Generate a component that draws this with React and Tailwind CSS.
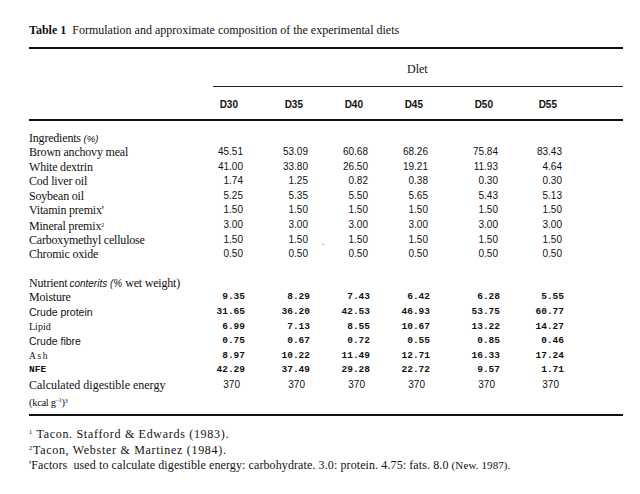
import React from "react";

const serif = "font-['Liberation_Serif','Times_New_Roman',serif]";
const sans = "font-['Liberation_Sans',Arial,sans-serif]";
const mono = "font-['Liberation_Mono','Courier_New',monospace]";
const row = "grid grid-cols-[184px_30px_65px_60px_60px_70px_64px] h-[14.6px] leading-[14.6px] overflow-visible";

const ingredients = [
  ["Brown anchovy meal", ["45.51", "53.09", "60.68", "68.26", "75.84", "83.43"]],
  ["White dextrin", ["41.00", "33.80", "26.50", "19.21", "11.93", "4.64"]],
  ["Cod liver oil", ["1.74", "1.25", "0.82", "0.38", "0.30", "0.30"]],
  ["Soybean oil", ["5.25", "5.35", "5.50", "5.65", "5.43", "5.13"]],
  ["Vitamin premix'", ["1.50", "1.50", "1.50", "1.50", "1.50", "1.50"]],
  ["MINERAL", ["3.00", "3.00", "3.00", "3.00", "3.00", "3.00"]],
  ["Carboxymethyl cellulose", ["1.50", "1.50", "1.50", "1.50", "1.50", "1.50"]],
  ["Chromic oxide", ["0.50", "0.50", "0.50", "0.50", "0.50", "0.50"]],
];

const nutrients = [
  ["Moisture", "serif", ["9.35", "8.29", "7.43", "6.42", "6.28", "5.55"]],
  ["Crude protein", "sans", ["31.65", "36.20", "42.53", "46.93", "53.75", "60.77"]],
  ["Lipid", "small", ["6.99", "7.13", "8.55", "10.67", "13.22", "14.27"]],
  ["Crude fibre", "sans", ["0.75", "0.67", "0.72", "0.55", "0.85", "0.46"]],
  ["Ash", "ash", ["8.97", "10.22", "11.49", "12.71", "16.33", "17.24"]],
  ["NFE", "mono", ["42.29", "37.49", "29.28", "22.72", "9.57", "1.71"]],
];

function labelClass(kind) {
  if (kind === "sans") return `${sans} text-[10.5px]`;
  if (kind === "small") return `${serif} text-[10px]`;
  if (kind === "ash") return `${serif} text-[9.5px] tracking-[1.6px]`;
  if (kind === "mono") return `${mono} text-[9.5px] font-bold`;
  return `${serif} text-[12px] tracking-[-0.2px]`;
}

export default function App() {
  return (
    <div className="w-[640px] h-[494px] bg-white text-[#111] overflow-hidden">
      <div className="pl-[29px] w-[623px]">
        {/* Title */}
        <div className={`${serif} pt-[23px] h-[37px] leading-[14px] text-[12px]`}>
          <span className="font-bold">Table 1</span>
          <span className="ml-[6px]">Formulation and approximate composition of the experimental diets</span>
        </div>
        <div className="mt-[10px] h-[2px] bg-[#111]" />

        {/* Diet header */}
        <div className={`${serif} mt-[13px] h-[14px] leading-[14px] text-[12px] pl-[378px]`}>Dlet</div>
        <div className="mt-[10px] ml-[184px] h-px bg-[#222]" />

        <div className={`mt-[11px] grid grid-cols-[184px_30px_65px_60px_60px_70px_64px] h-[14px] leading-[14px] ${sans} text-[10px] font-bold`}>
          <div />
          {["D30", "D35", "D40", "D45", "D50", "D55"].map((d) => (
            <div key={d} className="text-right pr-[5px]">{d}</div>
          ))}
        </div>
        <div className="mt-[7px] h-[1.5px] bg-[#111]" />

        {/* Ingredients */}
        <div className="mt-[10px]">
          <div className={`${serif} text-[12px] h-[14.6px] leading-[14.6px] tracking-[-0.2px]`}>
            Ingredients <span className={`${sans} italic text-[9.5px] tracking-normal`}>(%)</span>
          </div>
          {ingredients.map(([name, vals]) => (
            <div key={name} className={row}>
              <div className={`${serif} text-[12px] tracking-[-0.2px] whitespace-nowrap`}>
                {name === "MINERAL" ? (
                  <>
                    Mineral premix<span className="text-[6px] align-[3px]">2</span>
                  </>
                ) : (
                  name
                )}
              </div>
              {vals.map((v, i) =>
                name === "Carboxymethyl cellulose" && i === 2 ? (
                  <div key={i} className={`${sans} text-[10px] flex justify-between pl-[14px]`}>
                    <span className="relative top-[3px] text-[8px]">.</span>
                    <span>{v}</span>
                  </div>
                ) : (
                  <div key={i} className={`${sans} text-[10px] text-right`}>{v}</div>
                )
              )}
            </div>
          ))}
        </div>

        {/* Nutrients */}
        <div className="mt-[14px]">
          <div className={`${serif} text-[12px] h-[14.6px] leading-[14.6px] whitespace-nowrap tracking-[-0.2px]`}>
            Nutrient
            <span className={`${sans} italic text-[10px] ml-[2px] tracking-normal`}>conterits (%</span>
            <span className="ml-[3px]">wet weight)</span>
          </div>
          {nutrients.map(([name, kind, vals]) => (
            <div key={name} className={row}>
              <div className={`whitespace-nowrap ${labelClass(kind)}`}>{name}</div>
              {vals.map((v, i) => (
                <div key={i} className={`${mono} text-[9.5px] font-bold text-right -mr-[2px]`}>{v}</div>
              ))}
            </div>
          ))}
          <div className={row}>
            <div className={`${serif} text-[12px] whitespace-nowrap`}>Calculated digestible energy</div>
            {[0, 1, 2, 3, 4, 5].map((i) => (
              <div key={i} className={`${sans} text-[10px] text-right pr-[3px]`}>370</div>
            ))}
          </div>
          <div className={`${serif} text-[10.5px] h-[14.6px] leading-[14.6px] tracking-[-0.3px]`}>
            (kcal g<span className="text-[6px] align-[4px]">−1</span>)<span className="text-[6px] align-[3px]">3</span>
          </div>
        </div>

        <div className="mt-[7px] h-[1.5px] bg-[#111]" />

        {/* Footnotes */}
        <div className={`${serif} mt-[8px] text-[12px]`}>
          <div className="h-[16.5px] leading-[16.5px] tracking-[0.7px]">
            <span className="text-[6.5px] align-[4px]">1</span> Tacon. Stafford &amp; Edwards (1983).
          </div>
          <div className="h-[16.5px] leading-[16.5px] tracking-[0.7px]">
            <span className="text-[6.5px] align-[4px]">2</span>Tacon, Webster &amp; Martinez (1984).
          </div>
          <div className="h-[16.5px] leading-[16.5px] whitespace-nowrap tracking-[0.1px]">
            'Factors&nbsp; used to calculate digestible energy: carbohydrate. 3.0: protein. 4.75: fats. 8.0{" "}
            <span className="text-[11px]">(New. 1987).</span>
          </div>
        </div>
      </div>
    </div>
  );
}
